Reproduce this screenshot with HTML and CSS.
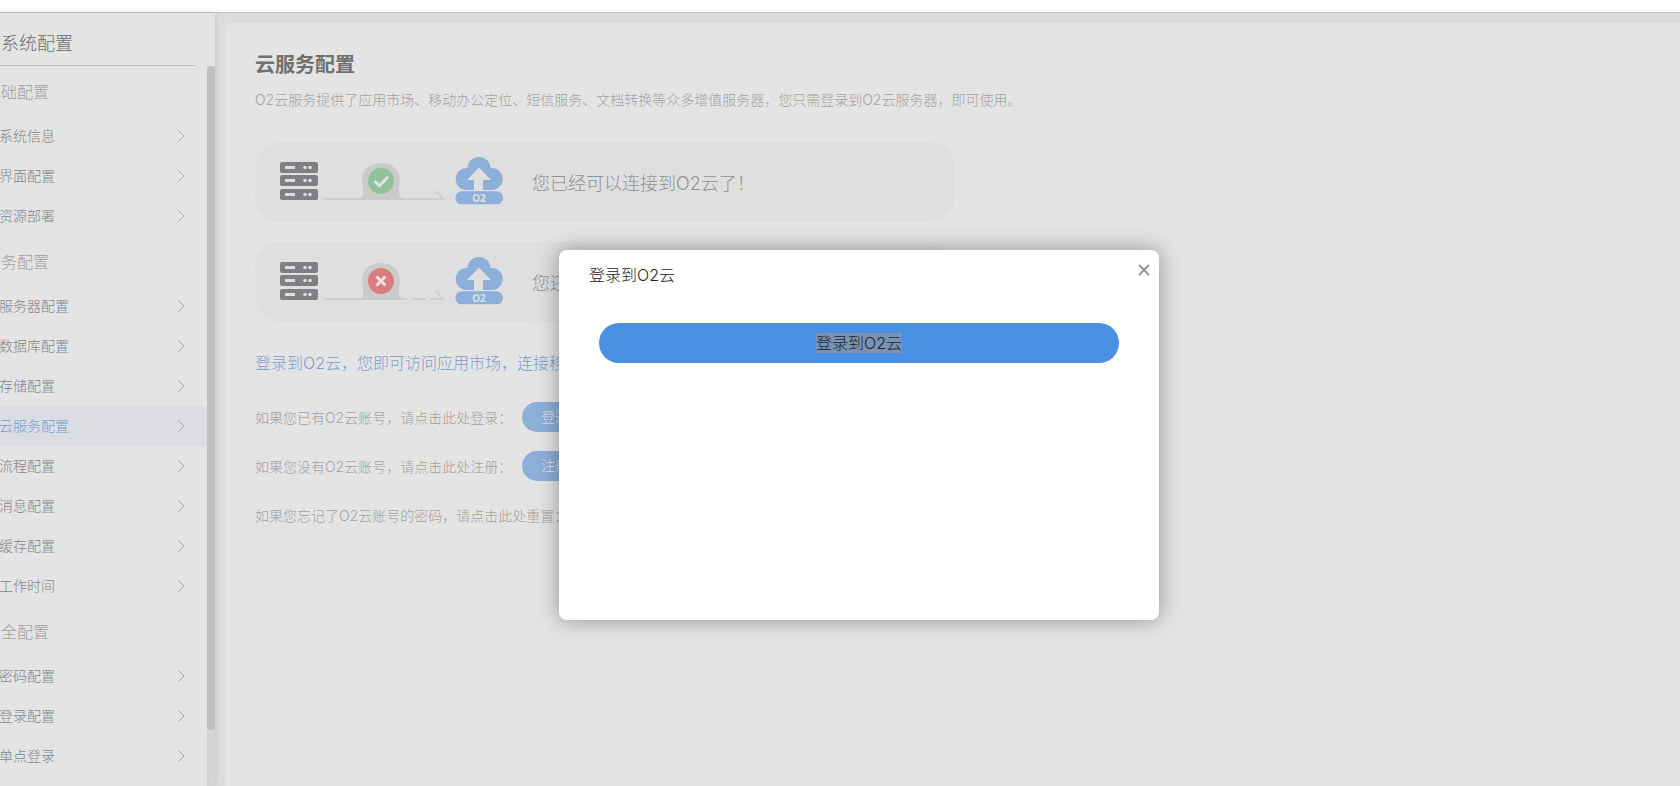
FILE: index.html
```html
<!DOCTYPE html>
<html lang="zh">
<head>
<meta charset="utf-8">
<title>云服务配置</title>
<link rel="stylesheet" href="styles.css">
</head>
<body>
<div class="topbar"></div>
<div class="layout">
  <aside class="sidebar">
    <nav class="nav">
      <div class="nav-inner">
        <div class="nav-title">系统配置</div>
        <div class="nav-group">基础配置</div>
        <a class="nav-item"><span>系统信息</span><svg class="chev" viewBox="0 0 7 12"><path d="M.5.5 6 6 .5 11.500"/></svg></a>
        <a class="nav-item"><span>界面配置</span><svg class="chev" viewBox="0 0 7 12"><path d="M.5.5 6 6 .5 11.500"/></svg></a>
        <a class="nav-item"><span>资源部署</span><svg class="chev" viewBox="0 0 7 12"><path d="M.5.5 6 6 .5 11.500"/></svg></a>
        <div class="nav-group">服务配置</div>
        <a class="nav-item"><span>服务器配置</span><svg class="chev" viewBox="0 0 7 12"><path d="M.5.5 6 6 .5 11.500"/></svg></a>
        <a class="nav-item"><span>数据库配置</span><svg class="chev" viewBox="0 0 7 12"><path d="M.5.5 6 6 .5 11.500"/></svg></a>
        <a class="nav-item"><span>存储配置</span><svg class="chev" viewBox="0 0 7 12"><path d="M.5.5 6 6 .5 11.500"/></svg></a>
        <a class="nav-item active"><span>云服务配置</span><svg class="chev" viewBox="0 0 7 12"><path d="M.5.5 6 6 .5 11.500"/></svg></a>
        <a class="nav-item"><span>流程配置</span><svg class="chev" viewBox="0 0 7 12"><path d="M.5.5 6 6 .5 11.500"/></svg></a>
        <a class="nav-item"><span>消息配置</span><svg class="chev" viewBox="0 0 7 12"><path d="M.5.5 6 6 .5 11.500"/></svg></a>
        <a class="nav-item"><span>缓存配置</span><svg class="chev" viewBox="0 0 7 12"><path d="M.5.5 6 6 .5 11.500"/></svg></a>
        <a class="nav-item"><span>工作时间</span><svg class="chev" viewBox="0 0 7 12"><path d="M.5.5 6 6 .5 11.500"/></svg></a>
        <div class="nav-group">安全配置</div>
        <a class="nav-item"><span>密码配置</span><svg class="chev" viewBox="0 0 7 12"><path d="M.5.5 6 6 .5 11.500"/></svg></a>
        <a class="nav-item"><span>登录配置</span><svg class="chev" viewBox="0 0 7 12"><path d="M.5.5 6 6 .5 11.500"/></svg></a>
        <a class="nav-item"><span>单点登录</span><svg class="chev" viewBox="0 0 7 12"><path d="M.5.5 6 6 .5 11.500"/></svg></a>
      </div>
    </nav>
    <div class="track"><div class="thumb"></div></div>
  </aside>
  <main class="main">
    <section class="panel">
      <h1 class="panel-title">云服务配置</h1>
      <p class="panel-desc">O2云服务提供了应用市场、移动办公定位、短信服务、文档转换等众多增值服务器，您只需登录到O2云服务器，即可使用。</p>
      <div class="status">
        <svg class="status-icon" viewBox="0 0 225 50">
          <g class="srv"><rect y="5" width="38" height="11" rx="2"/><rect y="18" width="38" height="11" rx="2"/><rect y="32" width="38" height="11" rx="2"/></g>
          <g class="srv-d"><rect x="5" y="9" width="10" height="3"/><rect x="5" y="22" width="10" height="3"/><rect x="5" y="36" width="10" height="3"/><circle cx="25" cy="10.500" r="1.800"/><circle cx="30" cy="10.500" r="1.800"/><circle cx="25" cy="23.500" r="1.800"/><circle cx="30" cy="23.500" r="1.800"/><circle cx="25" cy="37.500" r="1.800"/><circle cx="30" cy="37.500" r="1.800"/></g>
          <path class="link" d="M43 42H163L156 34"/>
          <path class="bump" d="M77 43C86 42 83 32 82 24 82 12 90 6 101 6 112 6 120 12 120 24 119 32 116 42 128 43Z"/>
          <circle class="ok" cx="101" cy="24" r="13"/>
          <path class="mark" d="M94.500 24 99.500 28.700 108 19.700"/>
          <g class="cloud"><circle cx="186.700" cy="22" r="11"/><circle cx="211.700" cy="22" r="11"/><circle cx="199" cy="11.500" r="11.500"/><rect x="187" y="14" width="25" height="19"/><rect x="175.300" y="34.300" width="47.700" height="13" rx="6.500"/></g>
          <path class="arrow" d="M199 10.500 211 23H203V33H194V23H187Z"/>
          <text class="o2" x="199" y="44.500">O2</text>
        </svg>
        <span class="status-text">您已经可以连接到O2云了！</span>
      </div>
      <div class="status">
        <svg class="status-icon" viewBox="0 0 225 50">
          <g class="srv"><rect y="5" width="38" height="11" rx="2"/><rect y="18" width="38" height="11" rx="2"/><rect y="32" width="38" height="11" rx="2"/></g>
          <g class="srv-d"><rect x="5" y="9" width="10" height="3"/><rect x="5" y="22" width="10" height="3"/><rect x="5" y="36" width="10" height="3"/><circle cx="25" cy="10.500" r="1.800"/><circle cx="30" cy="10.500" r="1.800"/><circle cx="25" cy="23.500" r="1.800"/><circle cx="30" cy="23.500" r="1.800"/><circle cx="25" cy="37.500" r="1.800"/><circle cx="30" cy="37.500" r="1.800"/></g>
          <path class="link" d="M43 42H127M132 42H145M150 42H163L156 34"/>
          <path class="bump" d="M77 43C86 42 83 32 82 24 82 12 90 6 101 6 112 6 120 12 120 24 119 32 116 42 128 43Z"/>
          <circle class="bad" cx="101" cy="24" r="13"/>
          <path class="mark" d="M96.500 19.500 105.500 28.500M105.500 19.500 96.500 28.500"/>
          <g class="cloud"><circle cx="186.700" cy="22" r="11"/><circle cx="211.700" cy="22" r="11"/><circle cx="199" cy="11.500" r="11.500"/><rect x="187" y="14" width="25" height="19"/><rect x="175.300" y="34.300" width="47.700" height="13" rx="6.500"/></g>
          <path class="arrow" d="M199 10.500 211 23H203V33H194V23H187Z"/>
          <text class="o2" x="199" y="44.500">O2</text>
        </svg>
        <span class="status-text">您还没有连接到O2云！</span>
      </div>
      <p class="lead">登录到O2云，您即可访问应用市场，连接移动办公，并使用更多增值服务。</p>
      <div class="action"><span>如果您已有O2云账号，请点击此处登录：</span><a class="pill">登录到O2云</a></div>
      <div class="action"><span>如果您没有O2云账号，请点击此处注册：</span><a class="pill">注册O2云账号</a></div>
      <div class="action last"><span>如果您忘记了O2云账号的密码，请点击此处重置：</span><a class="pill">重置密码</a></div>
    </section>
  </main>
</div>
<div class="mask"></div>
<div class="dialog">
  <div class="dialog-title">登录到O2云</div>
  <svg class="dialog-close" viewBox="0 0 12 12"><path d="M1 1 11 11M11 1 1 11"/></svg>
  <div class="dialog-body">
    <button class="login-btn"><span class="selected">登录到O2云</span></button>
  </div>
</div>
</body>
</html>
```
FILE: styles.css
```css
* { box-sizing: border-box; }
html, body { margin: 0; height: 786px; overflow: hidden; background: #fff; }
body { font-family: Inter, "Noto Sans CJK SC", "Noto Sans", sans-serif; font-weight: 300; position: relative; }

.topbar { height: 13px; background: #fff; border-bottom: 1px solid #c4c4c4; }
.layout { display: flex; height: 773px; background: #f6f6f6; }

.sidebar { width: 215px; flex: none; display: flex; background: #fff; box-shadow: 0 0 6px rgba(0,0,0,.12); position: relative; }
.nav { width: 207px; overflow: hidden; }
.nav-inner { width: 227px; margin-left: -20px; }
.nav-title { height: 53px; margin-right: 12px; padding: 14px 0 0 21px; font-size: 18px; line-height: 34px; color: #7a7a7a; border-bottom: 1px solid #d8d8d8; }
.nav-group { height: 50px; padding: 6px 0 0 5px; font-size: 16px; line-height: 40px; color: #b4b4b4; }
.nav-item { display: flex; align-items: center; justify-content: space-between; height: 40px; padding: 0 22px 0 19px; font-size: 14px; color: #959595; }
.nav-item span { margin-bottom: 2px; }
.nav-item.active { background: #f6f8fe; color: #85aee4; }
.chev { width: 7px; height: 12px; fill: none; stroke: #bcbcbc; stroke-width: 1; }
.track { width: 8px; margin-top: 53px; background: #efefef; }
.thumb { height: 664px; background: #d6d6d6; border-radius: 4px; }

.main { flex: 1; padding: 10px 0 0 10px; }
.panel { height: 100%; padding: 28px 30px; background: #fff; border-radius: 6px 0 0 0; }
.panel-title { margin: 0; font-size: 20px; line-height: 28px; font-weight: 700; color: #7e7e7e; }
.panel-desc { margin: 9px 0 0; font-size: 14px; line-height: 24px; color: #b6b6b6; }
.status { display: flex; align-items: center; width: 700px; height: 80px; margin-top: 20px; padding-left: 25px; background: #fafafa; border-radius: 25px; }
.panel-desc + .status { margin-top: 30px; }
.status-icon { width: 225px; height: 50px; flex: none; }
.status-text { margin-left: 27px; font-size: 18px; color: #a4a4a4; }
.srv rect { fill: #8e8e94; }
.srv-d rect, .srv-d circle { fill: #fafafa; }
.link { fill: none; stroke: #e8e8e8; stroke-width: 2; }
.bump { fill: #e4e4e4; }
.ok { fill: #a0dbaf; }
.bad { fill: #f58c8c; }
.mark { fill: none; stroke: #fff; stroke-width: 3; }
.cloud circle, .cloud rect { fill: #9ec4f3; }
.arrow { fill: #fafafa; }
.o2 { font-size: 10px; font-weight: 700; fill: #fafafa; text-anchor: middle; font-family: "Noto Sans", sans-serif; }

.lead { margin: 29px 0 0; font-size: 16px; line-height: 24px; color: #8ab2e6; white-space: nowrap; }
.action { display: flex; align-items: center; height: 30px; margin-top: 19px; font-size: 14px; color: #b6b6b6; }
.lead + .action { margin-top: 27px; }
.pill { display: block; margin-left: 10px; width: 120px; height: 30px; padding-left: 19px; line-height: 30px; border-radius: 15px; background: #9ec4f3; color: #fff; }

.mask { position: absolute; left: 0; right: 0; top: 13px; bottom: 0; background: rgba(0,0,0,.105); }

.dialog { position: absolute; left: 559px; top: 250px; width: 600px; height: 370px; background: #fff; border-radius: 8px; box-shadow: 0 0 22px rgba(0,0,0,.36); }
.dialog-title { padding: 12px 0 0 30px; font-size: 16px; line-height: 26px; color: #222; }
.dialog-close { position: absolute; right: 9px; top: 14px; width: 12px; height: 12px; fill: none; stroke: #999; stroke-width: 2.200; }
.dialog-body { padding: 35px 40px 0; }
.login-btn { display: block; width: 100%; height: 40px; padding: 0 0 2px; border: 0; border-radius: 20px; background: #4a90e2; font: inherit; font-size: 16px; color: #222; }
.selected { background: #7793b6; }
```
